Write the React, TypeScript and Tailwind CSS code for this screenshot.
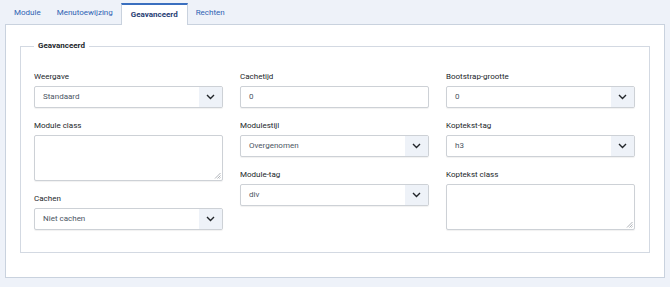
import React from "react"

const font = { fontFamily: "Roboto, 'Noto Sans', sans-serif" }

function Chevron() {
  return (
    <svg width="9" height="6" viewBox="0 0 9 6" fill="none">
      <path d="M1 1l3.5 3.5L8 1" stroke="#22262a" strokeWidth="1.4" />
    </svg>
  )
}

function Label({ children }: { children: React.ReactNode }) {
  return <div className="mb-[2px] h-[14px] text-[8px] leading-[14px] text-[#22262a]">{children}</div>
}

function Select({ label, value }: { label: string; value: string }) {
  return (
    <div className="mb-[11px]">
      <Label>{label}</Label>
      <div className="flex h-[22px] items-stretch overflow-hidden rounded-[2px] border border-[#cdd1d6] bg-white shadow-[0_1px_1px_rgba(0,0,0,0.06)]">
        <div className="flex flex-1 items-center pl-[8px] text-[8px] text-[#4b5563]">{value}</div>
        <div className="flex w-[23px] items-center justify-center bg-[#eef2f8]">
          <Chevron />
        </div>
      </div>
    </div>
  )
}

function Input({ label, value }: { label: string; value: string }) {
  return (
    <div className="mb-[11px]">
      <Label>{label}</Label>
      <div className="flex h-[22px] items-center rounded-[2px] border border-[#cdd1d6] bg-white pl-[8px] text-[8px] text-[#4b5563] shadow-[0_1px_1px_rgba(0,0,0,0.06)]">
        {value}
      </div>
    </div>
  )
}

function Textarea({ label }: { label: string }) {
  return (
    <div className="mb-[11px]">
      <Label>{label}</Label>
      <div className="relative h-[46px] rounded-[2px] border border-[#cdd1d6] bg-white shadow-[0_1px_1px_rgba(0,0,0,0.06)]">
        <svg className="absolute bottom-[1px] right-[1px]" width="7" height="7" viewBox="0 0 7 7">
          <path d="M6.5 1L1 6.5M6.5 3.5L3.5 6.5M6.5 5.5L5.5 6.5" stroke="#9aa0a6" strokeWidth="0.8" />
        </svg>
      </div>
    </div>
  )
}

const tabs = ["Module", "Menutoewijzing", "Geavanceerd", "Rechten"]

export default function App() {
  return (
    <div className="h-[287px] w-[670px] bg-[#eef2f9]" style={font}>
      {/* Tabs */}
      <div className="flex h-[24px] items-end pl-[6px]">
        {tabs.map(tab =>
          tab === "Geavanceerd" ? (
            <div
              key={tab}
              className="relative z-10 -mb-px flex h-[22px] items-center border-x border-t-[2px] border-x-[#c9d2de] border-t-[#3a6fbf] bg-white px-[9px] text-[8px] font-bold text-[#1f3d73]"
            >
              {tab}
            </div>
          ) : (
            <div key={tab} className="flex h-[22px] items-center px-[8px] text-[8px] text-[#2f63b3]">
              {tab}
            </div>
          )
        )}
      </div>

      {/* Panel */}
      <div className="mx-[5px] h-[254px] w-[660px] border border-[#c9d2de] bg-white px-[14px] pt-[14px]">
        <fieldset className="border border-[#d3d9e2] px-[13px] pb-[11px] pt-[17px]">
          <legend className="px-[4px] text-[8px] font-bold leading-[14px] text-[#22262a]">Geavanceerd</legend>
          <div className="grid grid-cols-3 gap-x-[17px] pr-px">
            <div>
              <Select label="Weergave" value="Standaard" />
              <Textarea label="Module class" />
              <Select label="Cachen" value="Niet cachen" />
            </div>
            <div>
              <Input label="Cachetijd" value="0" />
              <Select label="Modulestijl" value="Overgenomen" />
              <Select label="Module-tag" value="div" />
            </div>
            <div>
              <Select label="Bootstrap-grootte" value="0" />
              <Select label="Koptekst-tag" value="h3" />
              <Textarea label="Koptekst class" />
            </div>
          </div>
        </fieldset>
      </div>
    </div>
  )
}
